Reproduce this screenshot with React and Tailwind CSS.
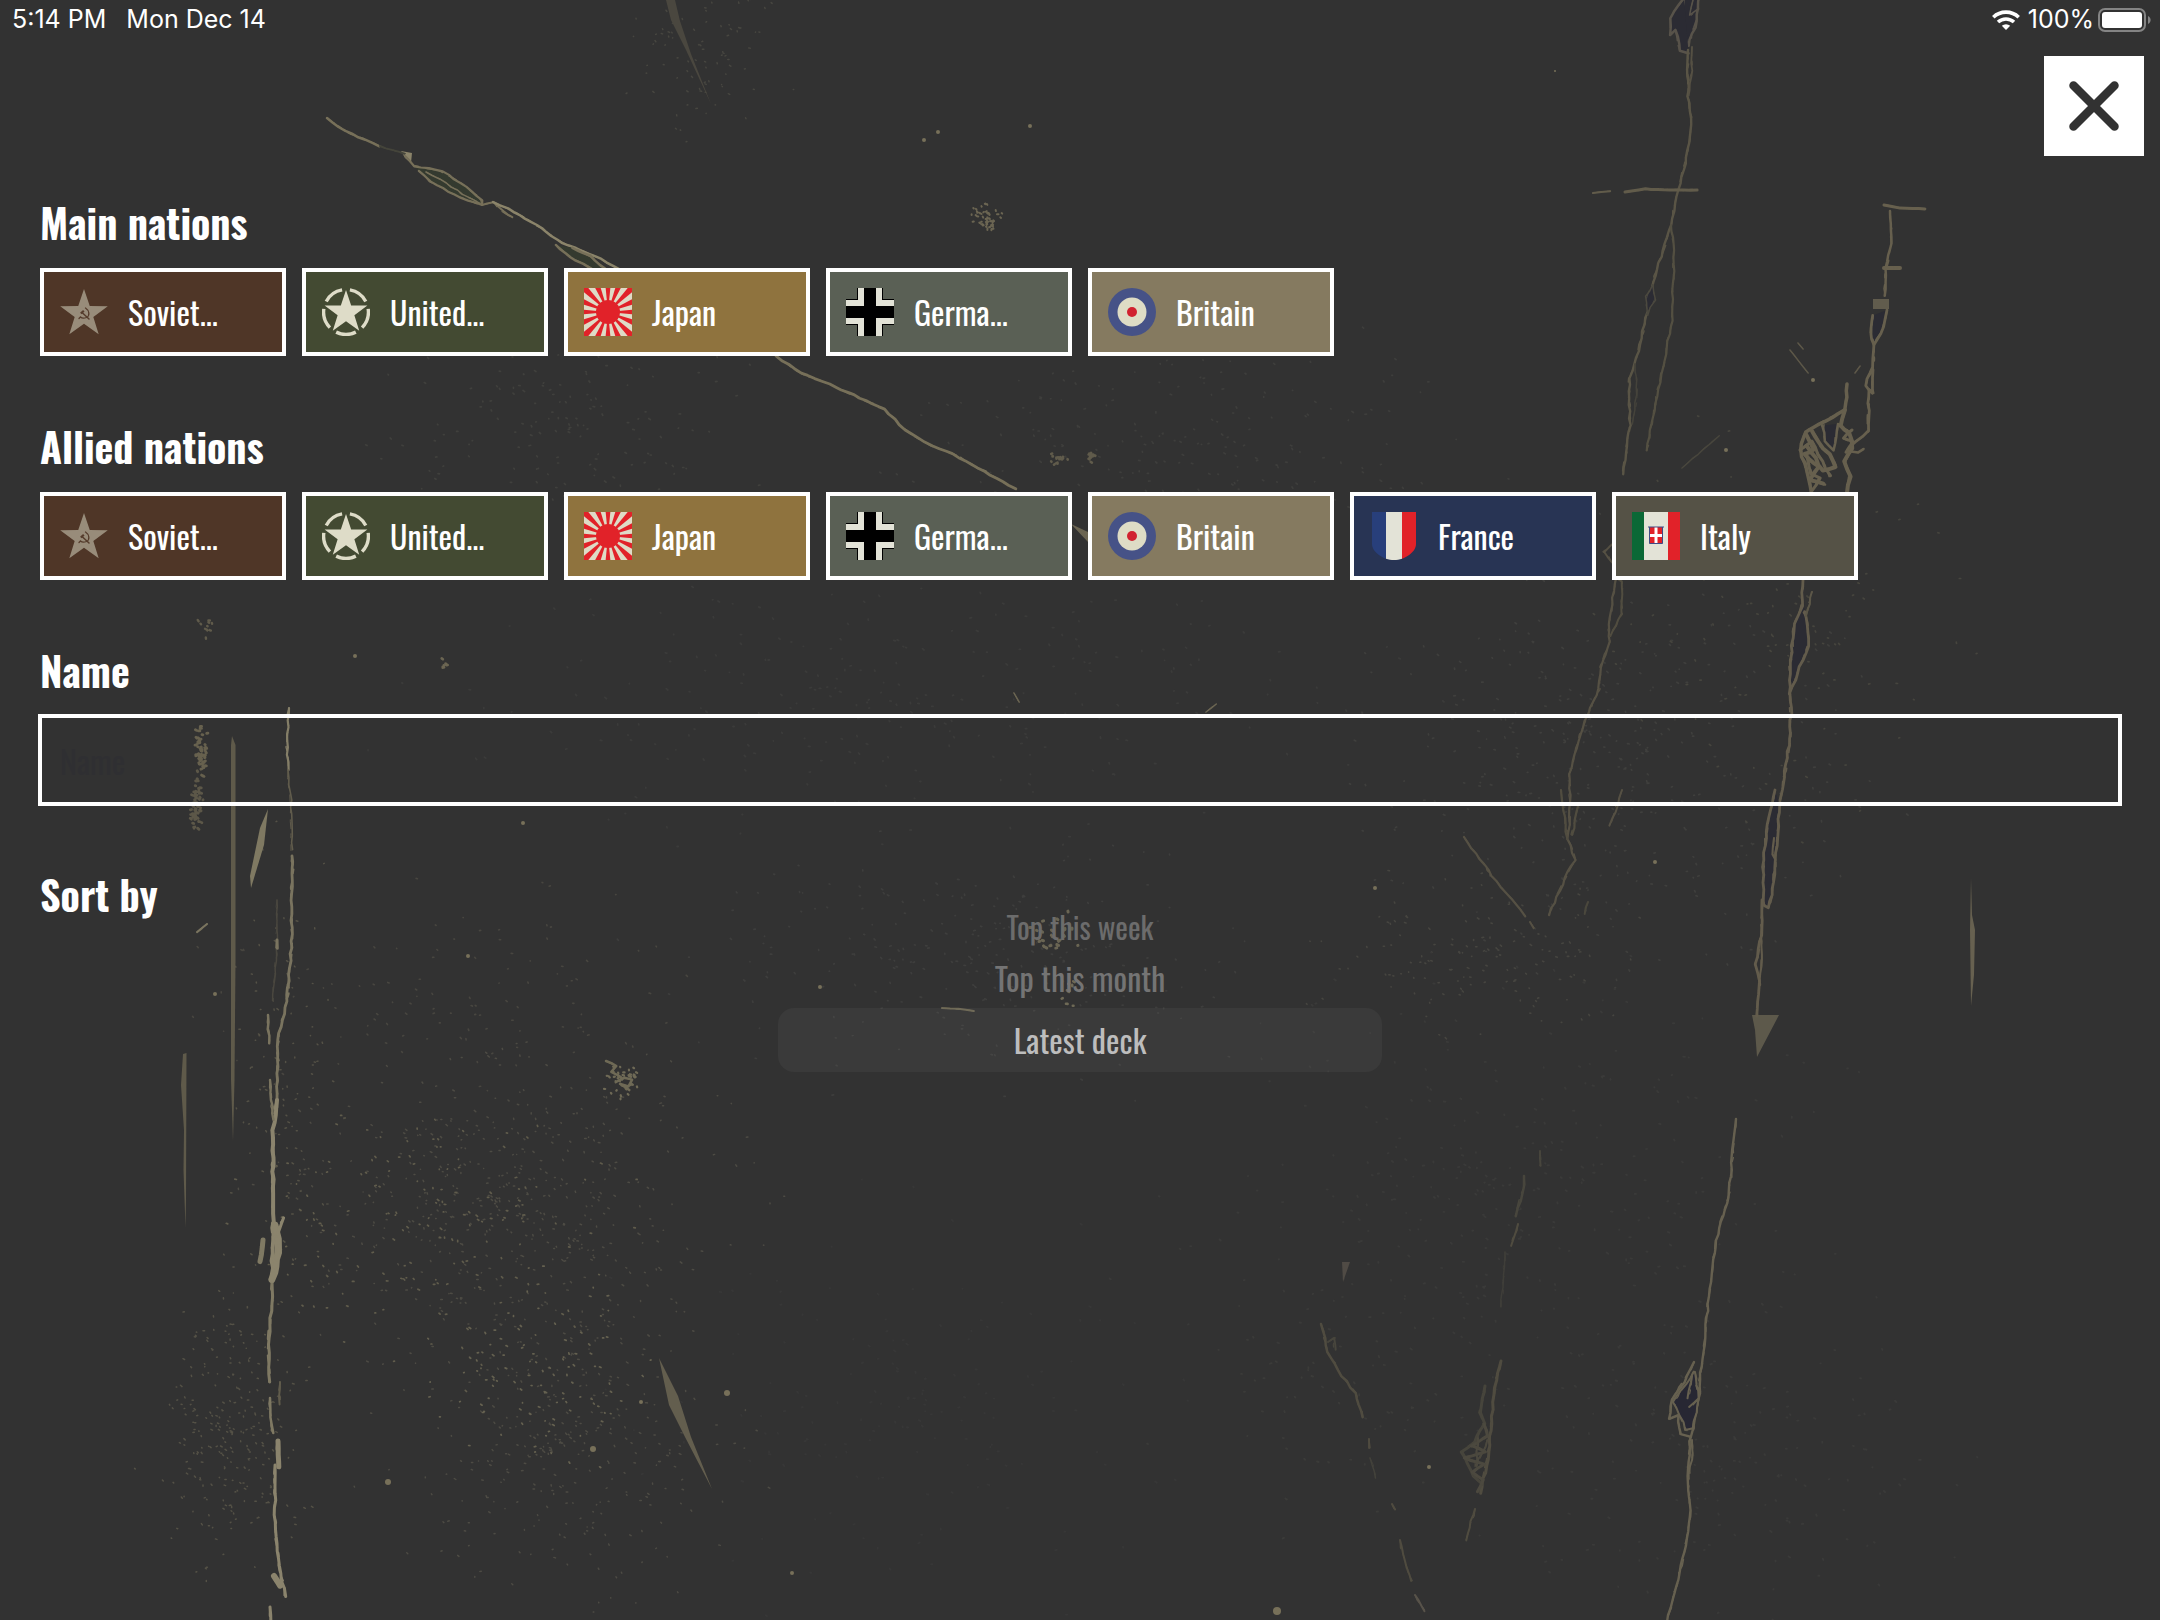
import { useId } from "react";

/* ---------- worn-surface backdrop ---------- */

function seeded(seed) {
  let s = seed;
  return () => {
    s = (s * 1664525 + 1013904223) % 4294967296;
    return s / 4294967296;
  };
}

// Turns a coarse list of points into a slightly ragged line.
function crack(points, seed = 7, jitter = 1.2) {
  const rnd = seeded(seed);
  let d = `M${points[0][0]} ${points[0][1]}`;
  for (let i = 1; i < points.length; i++) {
    const [x0, y0] = points[i - 1];
    const [x1, y1] = points[i];
    const steps = Math.max(1, Math.round(Math.hypot(x1 - x0, y1 - y0) / 7));
    for (let k = 1; k <= steps; k++) {
      const t = k / steps;
      const x = x0 + (x1 - x0) * t + (rnd() - 0.5) * 2 * jitter;
      const y = y0 + (y1 - y0) * t + (rnd() - 0.5) * jitter;
      d += `L${x.toFixed(1)} ${y.toFixed(1)}`;
    }
  }
  return d;
}

function speckles(cx, cy, rx, ry, count, seed) {
  const rnd = seeded(seed);
  let d = "";
  for (let i = 0; i < count; i++) {
    const a = rnd() * Math.PI * 2;
    const r = Math.pow(rnd(), 0.7) * (0.55 + rnd() * 0.75);
    d += `M${(cx + Math.cos(a) * r * rx).toFixed(1)} ${(cy + Math.sin(a) * r * ry).toFixed(1)}l${(rnd() * 1.6).toFixed(1)} ${(rnd() * 1.8 - 0.5).toFixed(1)}`;
  }
  return d;
}

const LINES = [
  // long diagonal, upper left
  { p: [[327, 118], [345, 131], [380, 146]], c: "#777059", w: 2.5 },
  { p: [[380, 146], [405, 154]], c: "#45453b", w: 2 },
  { p: [[405, 156], [415, 166], [442, 171], [461, 183], [482, 200], [482, 205], [461, 198], [430, 182], [419, 171]], c: "#777059", w: 2.2, f: "#343a2f" },
  { p: [[426, 172], [446, 183], [462, 194], [480, 203]], c: "#777059", w: 1.5 },
  { p: [[482, 205], [493, 202], [503, 211], [512, 217]], c: "#777059", w: 2 },
  { p: [[493, 202], [515, 212], [536, 225], [562, 243], [595, 256], [624, 272]], c: "#8b846a", w: 2.5 },
  { p: [[556, 245], [570, 257], [596, 271], [606, 270], [590, 256], [572, 248]], c: "#777059", w: 2.5, f: "#343a2f" },
  { p: [[776, 356], [801, 373], [836, 387], [884, 409], [905, 430], [932, 446], [953, 454], [991, 475], [1015, 489]], c: "#777059", w: 2.8 },
  // upper right, long crack
  { p: [[1699, -4], [1697, 21], [1688, 46], [1680, 29], [1684, -4]], c: "#58534a", w: 2.5, f: "#2b2b33" },
  { p: [[1684, -2], [1670, 18], [1670, 35], [1676, 30], [1680, 51], [1688, 53]], c: "#58534a", w: 2.5, f: "#2b2b33" },
  { p: [[1693, 0], [1690, 15], [1698, 9]], c: "#58534a", w: 1.5 },
  { p: [[1688, 50], [1688, 96], [1691, 118], [1690, 137], [1685, 164], [1678, 190], [1671, 225], [1653, 282], [1646, 318], [1635, 364], [1629, 378], [1630, 425], [1623, 474]], c: "#5a5546", w: 2.4 },
  { p: [[1692, 47], [1692, 71], [1688, 96]], c: "#565144", w: 1.8 },
  { p: [[1635, 364], [1637, 395], [1632, 424]], c: "#45433b", w: 1.5 },
  { p: [[1653, 285], [1655, 300], [1647, 315], [1646, 296], [1653, 285]], c: "#4c493f", w: 1.5, f: "#2b2b33" },
  { p: [[1671, 225], [1674, 250], [1672, 321], [1663, 367], [1655, 404], [1647, 450]], c: "#545042", w: 2.2 },
  { p: [[1616, 541], [1604, 552], [1616, 566]], c: "#565144", w: 2 },
  { p: [[1616, 578], [1609, 624], [1609, 642], [1601, 667], [1599, 689], [1588, 714], [1580, 735], [1570, 774], [1570, 810], [1568, 839], [1575, 860], [1565, 878], [1549, 915]], c: "#565144", w: 2.2 },
  { p: [[1616, 578], [1622, 581], [1622, 614], [1610, 636]], c: "#514d40", w: 2 },
  { p: [[1561, 790], [1567, 839]], c: "#514d40", w: 2.2 },
  { p: [[1578, 806], [1572, 835]], c: "#514d40", w: 2.2 },
  { p: [[1464, 837], [1492, 876], [1525, 916]], c: "#565144", w: 2.2 },
  { p: [[1530, 922], [1534, 928]], c: "#565144", w: 2 },
  { p: [[1622, 790], [1610, 826]], c: "#565144", w: 2 },
  { p: [[1588, 902], [1584, 914]], c: "#4b483d", w: 2 },
  { p: [[1593, 193], [1610, 191]], c: "#625c4b", w: 2, j: 0.4 },
  { p: [[1625, 192], [1645, 189], [1670, 190], [1697, 190]], c: "#625c4b", w: 3, j: 0.5 },
  // far right crack
  { p: [[1884, 205], [1900, 208], [1925, 209]], c: "#67604e", w: 3, j: 0.3 },
  { p: [[1890, 211], [1892, 243], [1886, 268], [1885, 296]], c: "#67604e", w: 2.5 },
  { p: [[1884, 268], [1900, 268]], c: "#67604e", w: 4, j: 0.1 },
  { p: [[1887, 310], [1884, 327], [1874, 345], [1871, 334], [1873, 315]], c: "#67604e", w: 2.8, f: "#2b2b33" },
  { p: [[1874, 343], [1873, 367], [1865, 386], [1873, 393], [1873, 370]], c: "#67604e", w: 2.8 },
  { p: [[1869, 390], [1868, 431], [1850, 447]], c: "#67604e", w: 2.8 },
  { p: [[1847, 384], [1845, 410], [1825, 421], [1805, 432], [1800, 450], [1807, 471], [1812, 494]], c: "#67604e", w: 3.5 },
  { p: [[1845, 410], [1840, 426], [1850, 433], [1852, 448], [1845, 461], [1850, 477], [1846, 494]], c: "#67604e", w: 4 },
  { p: [[1852, 430], [1843, 438], [1853, 442], [1846, 452]], c: "#67604e", w: 3 },
  { p: [[1838, 424], [1834, 450], [1825, 441], [1823, 425]], c: "#67604e", w: 2.5, f: "#2b2b33" },
  { p: [[1806, 434], [1814, 450], [1804, 454], [1818, 467], [1810, 480], [1824, 484]], c: "#67604e", w: 4 },
  { p: [[1812, 431], [1822, 448], [1830, 454], [1836, 467], [1822, 471], [1816, 458], [1806, 446]], c: "#67604e", w: 4 },
  { p: [[1800, 450], [1812, 441], [1822, 461], [1830, 476]], c: "#67604e", w: 3 },
  { p: [[1807, 456], [1811, 474], [1820, 478], [1812, 492]], c: "#67604e", w: 3 },
  { p: [[1848, 451], [1858, 453], [1864, 449]], c: "#67604e", w: 2.5 },
  { p: [[1803, 580], [1802, 606], [1798, 615], [1794, 624], [1790, 667], [1790, 694], [1800, 667], [1808, 646], [1808, 625], [1804, 612]], c: "#635c4c", w: 2.8, f: "#2b2b33" },
  { p: [[1806, 616], [1812, 592]], c: "#5c5748", w: 2 },
  { p: [[1790, 694], [1791, 714], [1790, 739], [1785, 771], [1780, 803]], c: "#635c4c", w: 2.8 },
  { p: [[1775, 790], [1767, 824], [1763, 867], [1764, 905], [1768, 908], [1773, 889], [1777, 846], [1779, 806]], c: "#635c4c", w: 2.8, f: "#2b2b33" },
  { p: [[1774, 838], [1772, 854], [1776, 860]], c: "#635c4c", w: 2 },
  { p: [[1762, 900], [1761, 935], [1756, 964], [1760, 981], [1757, 1016]], c: "#635c4c", w: 2.8 },
  { p: [[1761, 935], [1762, 960], [1760, 985]], c: "#635c4c", w: 2 },
  { p: [[1736, 1119], [1733, 1149], [1729, 1197], [1719, 1228], [1712, 1266], [1708, 1304], [1704, 1345], [1700, 1373], [1699, 1400], [1693, 1428], [1690, 1441], [1688, 1476], [1690, 1517], [1685, 1552], [1676, 1586], [1667, 1622]], c: "#676150", w: 2.4 },
  { p: [[1694, 1362], [1684, 1382], [1671, 1400], [1670, 1419], [1678, 1415], [1680, 1434], [1690, 1437]], c: "#676150", w: 2.5 },
  { p: [[1695, 1372], [1699, 1398], [1693, 1428], [1686, 1430], [1677, 1408], [1673, 1402], [1694, 1372]], c: "#676150", w: 2, f: "#272733" },
  { p: [[1692, 1376], [1688, 1398]], c: "#676150", w: 2 },
  { p: [[1699, 1398], [1690, 1407]], c: "#676150", w: 2 },
  { p: [[1692, 1440], [1692, 1460], [1688, 1480]], c: "#676150", w: 2 },
  // faint lower centre-right
  { p: [[1540, 1151], [1540, 1166]], c: "#48463d", w: 2 },
  { p: [[1524, 1176], [1524, 1186], [1516, 1216]], c: "#48463d", w: 2.5 },
  { p: [[1518, 1224], [1516, 1231], [1511, 1246]], c: "#504c40", w: 2 },
  { p: [[1505, 1252], [1504, 1275], [1501, 1307]], c: "#3f3e39", w: 1.5 },
  { p: [[1501, 1361], [1496, 1380], [1491, 1424], [1488, 1459], [1480, 1493]], c: "#504c40", w: 3 },
  { p: [[1485, 1386], [1480, 1412], [1484, 1424], [1474, 1442], [1462, 1452], [1474, 1476], [1482, 1484]], c: "#47453c", w: 3 },
  { p: [[1484, 1424], [1488, 1436], [1472, 1446], [1486, 1452], [1464, 1458], [1484, 1464], [1472, 1472], [1484, 1480], [1478, 1492]], c: "#4c493f", w: 3 },
  { p: [[1478, 1438], [1476, 1466], [1488, 1440]], c: "#4c493f", w: 2 },
  { p: [[1475, 1509], [1466, 1540]], c: "#504c40", w: 2 },
  { p: [[1321, 1324], [1328, 1352], [1342, 1376], [1355, 1393], [1363, 1417]], c: "#504c40", w: 2.5 },
  { p: [[1328, 1342], [1334, 1338], [1335, 1350]], c: "#48463d", w: 2 },
  { p: [[1369, 1439], [1369, 1448]], c: "#504c40", w: 2 },
  { p: [[1370, 1458], [1376, 1478]], c: "#43423b", w: 1.5 },
  { p: [[1392, 1504], [1395, 1509]], c: "#504c40", w: 2 },
  { p: [[1400, 1540], [1405, 1562], [1412, 1581]], c: "#504c40", w: 2 },
  { p: [[1415, 1595], [1425, 1611]], c: "#58534a", w: 2 },
  // left vertical crack
  { p: [[289, 708], [287, 740], [288, 770]], c: "#857f68", w: 2.2 },
  { p: [[288, 770], [291, 800], [292, 850]], c: "#615c4c", w: 1.6 },
  { p: [[292, 856], [293, 867], [291, 900], [292, 941], [287, 1001], [278, 1040], [277, 1107]], c: "#7a745f", w: 2.8 },
  { p: [[277, 1100], [273, 1130], [273, 1221], [272, 1281]], c: "#8b846d", w: 4 },
  { p: [[272, 1281], [272, 1304], [268, 1345], [270, 1382]], c: "#7f7963", w: 3 },
  { p: [[270, 1398], [270, 1410], [273, 1433]], c: "#7f7963", w: 2.5 },
  { p: [[278, 1441], [278, 1467]], c: "#8b846d", w: 5 },
  { p: [[275, 1465], [275, 1529], [279, 1566], [285, 1596]], c: "#8b846d", w: 3 },
  { p: [[270, 1607], [271, 1622]], c: "#8b846d", w: 3 },
  { p: [[280, 1382], [279, 1404]], c: "#615c4c", w: 2 },
  { p: [[277, 900], [277, 948], [273, 1001]], c: "#4a473f", w: 1.5 },
  { p: [[270, 1080], [273, 1120]], c: "#7a745f", w: 2.4 },
  { p: [[268, 1015], [269, 1043]], c: "#7a745f", w: 2.5 },
  { p: [[277, 940], [277, 948]], c: "#7a745f", w: 3 },
  { p: [[275, 1225], [279, 1246], [276, 1266], [272, 1279]], c: "#8b846d", w: 7 },
  { p: [[277, 1236], [283, 1218]], c: "#8b846d", w: 3 },
  { p: [[263, 1240], [260, 1262]], c: "#7f7963", w: 5 },
  { p: [[274, 1576], [280, 1586]], c: "#8b846d", w: 6 },
  // small nicks
  { p: [[207, 924], [197, 932]], c: "#7a745f", w: 2, j: 0.3 },
  { p: [[1790, 350], [1808, 373]], c: "#5c5748", w: 1.5, j: 0.2 },
  { p: [[1798, 343], [1803, 349]], c: "#5c5748", w: 1.5, j: 0.2 },
  { p: [[1682, 468], [1719, 436]], c: "#48463d", w: 1.5, j: 0.5 },
  { p: [[1855, 373], [1860, 366]], c: "#5c5748", w: 1.5, j: 0.2 },
  { p: [[942, 1008], [958, 1009], [974, 1011]], c: "#6b6552", w: 2, j: 0.4 },
  { p: [[1206, 712], [1216, 704]], c: "#6b6552", w: 1.5, j: 0.4 },
  { p: [[1014, 693], [1019, 702]], c: "#6b6552", w: 1.5, j: 0.4 },
  // chipped cluster, lower left
  { p: [[606, 1061], [616, 1066], [612, 1072], [620, 1076]], c: "#6f6a56", w: 2.5 },
  { p: [[616, 1082], [624, 1078], [632, 1080], [628, 1086], [620, 1084], [630, 1090]], c: "#6f6a56", w: 2.5 },
];

const SHARDS = [
  { d: "M666 0H675L680 21L691 54L711 104L686 50L671 20Z", c: "#4a473f" },
  { d: "M659 1358L678 1396L691 1437L712 1489L685 1437L669 1405Z", c: "#635e4e" },
  { d: "M232 736L235.500 745V960L234.500 1080L233 1141L231 1080L231 745Z", c: "#5f5a4a" },
  { d: "M183 1054L186.500 1053L186 1200L185.500 1228L183.500 1170L184 1130L181 1085Z", c: "#5f5a4a" },
  { d: "M268 809L264 845L251 888L250 876L260 828Z", c: "#7f7962" },
  { d: "M1971 878L1972 915L1975 930L1974 975L1971 1006L1970 930Z", c: "#676150" },
  { d: "M1752 1015L1779 1015L1757 1057L1755 1030Z", c: "#5d594b" },
  { d: "M1342 1262H1350L1343 1282Z", c: "#504b45" },
  { d: "M401 151L412 153L411 163L405 158Z", c: "#8b846a" },
  { d: "M1873 299H1889V309H1873Z", c: "#615c4d" },
  { d: "M1071 524L1088 532V542Z", c: "#6b6552" },
];

const FIELDS = [
  { a: [500, 1200, 230, 160, 480, 3], c: "#4d4b44", w: 1.5 },
  { a: [420, 1230, 180, 130, 170, 77], c: "#605c4c", w: 1.7 },
  { a: [560, 1440, 170, 160, 320, 12], c: "#4d4b44", w: 1.5 },
  { a: [540, 1370, 110, 90, 110, 61], c: "#656150", w: 1.7 },
  { a: [230, 1430, 75, 150, 260, 21], c: "#545146", w: 1.5 },
  { a: [285, 1100, 50, 260, 110, 31], c: "#545146", w: 1.5 },
  { a: [470, 1000, 240, 110, 110, 14], c: "#484640", w: 1.6 },
  { a: [700, 60, 85, 90, 90, 33], c: "#474640", w: 1.5 },
  { a: [570, 420, 180, 100, 150, 41], c: "#40403d", w: 1.7 },
  { a: [900, 700, 480, 140, 260, 51], c: "#3b3b3a", w: 1.8 },
  { a: [980, 960, 300, 120, 240, 81], c: "#3e3e3d", w: 1.7 },
  { a: [1620, 760, 260, 220, 400, 91], c: "#3f3f3d", w: 1.7 },
  { a: [1480, 950, 160, 90, 140, 99], c: "#464540", w: 1.6 },
  { a: [1500, 1180, 340, 220, 320, 101], c: "#3a3a39", w: 1.9 },
  { a: [1180, 440, 300, 110, 200, 105], c: "#3e3e3c", w: 1.7 },
  { a: [1720, 1460, 260, 150, 180, 111], c: "#3a3a39", w: 1.9 },
  { a: [900, 1400, 260, 200, 160, 121], c: "#373737", w: 1.9 },
  { a: [1780, 620, 180, 180, 110, 131], c: "#46453e", w: 1.7 },
  { a: [1330, 1400, 160, 120, 60, 139], c: "#3b3b39", w: 1.9 },
  { a: [986, 217, 14, 17, 50, 141], c: "#6b6552", w: 2 },
  { a: [620, 1078, 19, 19, 40, 151], c: "#6f6a56", w: 2.2 },
  { a: [1050, 935, 26, 24, 26, 161], c: "#6a6553", w: 3 },
  { a: [1070, 990, 12, 14, 10, 171], c: "#6f6a56", w: 2.6 },
  { a: [1057, 459, 10, 7, 14, 181], c: "#605b4b", w: 2.6 },
  { a: [1092, 456, 5, 9, 10, 191], c: "#605b4b", w: 2.6 },
  { a: [201, 750, 6, 28, 50, 201], c: "#67614e", w: 2.8 },
  { a: [196, 805, 6, 30, 60, 211], c: "#5c5748", w: 2.8 },
  { a: [206, 625, 8, 14, 10, 221], c: "#605b4b", w: 2.4 },
  { a: [445, 662, 6, 8, 6, 231], c: "#6b6552", w: 2.6 },
];

const DOTS = [
  [727, 1393, 3], [593, 1449, 3], [388, 1482, 3], [792, 1573, 2], [215, 994, 2],
  [468, 956, 2], [1277, 1611, 4], [1375, 888, 2], [355, 656, 2], [820, 987, 2],
  [1726, 450, 2], [1813, 380, 2], [641, 1402, 2], [1555, 71, 1], [938, 132, 2],
  [924, 140, 2], [1030, 126, 2], [523, 823, 2], [1655, 862, 2], [1429, 1467, 2],
];

function Backdrop() {
  return (
    <svg
      aria-hidden="true"
      viewBox="0 0 2160 1620"
      preserveAspectRatio="xMidYMid slice"
      className="pointer-events-none absolute inset-0 h-full w-full"
      fill="none"
      strokeLinecap="round"
      strokeLinejoin="round"
    >
      {FIELDS.map((f, i) => (
        <path key={i} d={speckles(...f.a)} stroke={f.c} strokeWidth={f.w} />
      ))}
      {SHARDS.map((s, i) => (
        <path key={i} d={s.d} fill={s.c} />
      ))}
      {LINES.map((l, i) => (
        <g key={i} stroke={l.c}>
          <path d={crack(l.p, i * 13 + 5, l.j ?? 0.9)} strokeWidth={l.w} fill={l.f ?? "none"} />
          <path
            d={crack(l.p, i * 29 + 11, (l.j ?? 0.9) * 1.4)}
            strokeWidth={l.w * 0.6}
            strokeDasharray="9 5 4 7"
          />
        </g>
      ))}
      {DOTS.map(([x, y, r], i) => (
        <circle key={i} cx={x} cy={y} r={r} fill="#777059" />
      ))}
    </svg>
  );
}

/* ---------- nation emblems (48 x 48) ---------- */

function polar(r, deg, cx = 24, cy = 24) {
  const a = (deg * Math.PI) / 180;
  return `${(cx + r * Math.cos(a)).toFixed(2)} ${(cy + r * Math.sin(a)).toFixed(2)}`;
}

function starPath(outer, inner, cy) {
  const pts = [];
  for (let i = 0; i < 10; i++) pts.push(polar(i % 2 ? inner : outer, -90 + i * 36, 24, cy));
  return `M${pts.join("L")}Z`;
}

function SovietIcon() {
  return (
    <>
      <path d={starPath(25, 9.8, 26)} fill="#988c7a" />
      <g fill="none" stroke="#553c2c" strokeLinecap="round">
        <path d="M25.500 20C29.500 22.500 30 28 26.500 29.500C24 30.500 21.500 30 20.500 29L19 30.500" strokeWidth="1.300" />
        <path d="M22 24.500L29 31" strokeWidth="1.500" />
        <path d="M20.800 25.500L23.800 22.800" strokeWidth="2.200" strokeLinecap="butt" />
      </g>
    </>
  );
}

function UnitedStatesIcon() {
  return (
    <>
      <path d={starPath(22.5, 8.8, 24.5)} fill="#dedcc8" />
      {[0, 1, 2, 3, 4].map((i) => (
        <path
          key={i}
          d={`M${polar(22.4, -80 + i * 72)}A22.4 22.4 0 0 1 ${polar(22.4, -28 + i * 72)}`}
          fill="none"
          stroke="#dedcc8"
          strokeWidth="3.400"
        />
      ))}
    </>
  );
}

function JapanIcon() {
  const clip = useId();
  return (
    <>
      <clipPath id={clip}>
        <rect width="48" height="48" />
      </clipPath>
      <rect width="48" height="48" fill="#dedbc6" />
      <g fill="#e12229" clipPath={`url(#${clip})`}>
        {Array.from({ length: 16 }, (_, i) => (
          <path key={i} d={`M24 24L${polar(40, i * 22.5 - 5.6)}L${polar(40, i * 22.5 + 5.6)}Z`} />
        ))}
        <circle cx="24" cy="24" r="12" />
      </g>
    </>
  );
}

function GermanyIcon() {
  return (
    <>
      <path d="M11 0H37V11H48V37H37V48H11V37H0V11H11Z" fill="#000" />
      <path d="M12 0H36V12H48V36H36V48H12V36H0V12H12Z" fill="#e3e3d7" />
      <path d="M18 0H30V18H48V30H30V48H18V30H0V18H18Z" fill="#000" />
    </>
  );
}

function BritainIcon() {
  return (
    <>
      <circle cx="24" cy="24" r="24" fill="#465287" />
      <circle cx="24" cy="24" r="14.500" fill="#dedcc5" />
      <circle cx="24" cy="24" r="5" fill="#d1222f" />
    </>
  );
}

function FranceIcon() {
  const clip = useId();
  return (
    <>
      <clipPath id={clip}>
        <path d="M2 0H46V32C46 40 35 48 24 48C13 48 2 40 2 32Z" />
      </clipPath>
      <g clipPath={`url(#${clip})`}>
        <rect x="2" width="14" height="48" fill="#283f7b" />
        <rect x="16" width="16" height="48" fill="#e3e3d7" />
        <rect x="32" width="14" height="48" fill="#e12229" />
      </g>
    </>
  );
}

function ItalyIcon() {
  return (
    <>
      <rect width="12" height="48" fill="#0a6836" />
      <rect x="12" width="24" height="48" fill="#e3e3d7" />
      <rect x="36" width="12" height="48" fill="#e12229" />
      <path d="M16 15H32M17.500 15V31.500H30.500V15" fill="#e12229" stroke="#3f4a86" />
      <path d="M22.500 15.500H25.500V22H30V25H25.500V31H22.500V25H18V22H22.500Z" fill="#fff" />
    </>
  );
}

const SOVIET = { label: "Soviet...", name: "Soviet Union", Icon: SovietIcon, tone: "bg-[#4f3627]" };
const UNITED = { label: "United...", name: "United States", Icon: UnitedStatesIcon, tone: "bg-[#434a32]" };
const JAPAN = { label: "Japan", name: "Japan", Icon: JapanIcon, tone: "bg-[#8f733e]" };
const GERMANY = { label: "Germa...", name: "Germany", Icon: GermanyIcon, tone: "bg-[#5a6055]" };
const BRITAIN = { label: "Britain", name: "Britain", Icon: BritainIcon, tone: "bg-[#857a60]" };
const FRANCE = { label: "France", name: "France", Icon: FranceIcon, tone: "bg-[#283454]" };
const ITALY = { label: "Italy", name: "Italy", Icon: ItalyIcon, tone: "bg-[#555246]" };

const MAIN = [SOVIET, UNITED, JAPAN, GERMANY, BRITAIN];
const ALLIED = [...MAIN, FRANCE, ITALY];

function NationButton({ nation }) {
  const { label, name, Icon, tone } = nation;
  return (
    <button
      type="button"
      title={name}
      className={`flex h-[88px] w-[246px] items-center gap-5 border-4 border-white px-4 text-left text-[32px] leading-[48px] text-white ${tone}`}
    >
      <svg viewBox="0 0 48 48" className="size-12 shrink-0" aria-hidden="true">
        <Icon />
      </svg>
      {label}
    </button>
  );
}

function Heading({ children, ...rest }) {
  return (
    <h2 className="mb-[22px] text-[40px] leading-[48px] font-bold text-white" {...rest}>
      {children}
    </h2>
  );
}

function NationSection({ title, nations }) {
  return (
    <section>
      <Heading>{title}</Heading>
      <div className="flex flex-wrap gap-4">
        {nations.map((n) => (
          <NationButton key={n.name} nation={n} />
        ))}
      </div>
    </section>
  );
}

/* ---------- status bar ---------- */

function StatusBar() {
  return (
    <header className="flex h-10 items-center justify-between pr-2 pl-3 font-['Inter',sans-serif] text-[25px] text-white">
      <div className="flex gap-5">
        <span>5:14 PM</span>
        <span>Mon Dec 14</span>
      </div>
      <div className="flex items-center gap-1">
        <svg viewBox="0 0 28 20" className="mr-1 h-5 w-7" aria-hidden="true" fill="none" stroke="#fff" strokeWidth="3.600">
          <path d="M1.300 7.200A18.500 18.500 0 0 1 26.700 7.200" />
          <path d="M6 12A12 12 0 0 1 22 12" />
          <path d="M14 20L9.800 15.800A6.200 6.200 0 0 1 18.200 15.800Z" fill="#fff" stroke="none" />
        </svg>
        <span>100%</span>
        <svg viewBox="0 0 54 24" className="h-6 w-[54px]" aria-hidden="true">
          <rect x="1" y="1" width="46" height="22" rx="6" fill="none" stroke="#848484" strokeWidth="2" />
          <rect x="4" y="4" width="40" height="16" rx="3" fill="#fff" />
          <path d="M50 8C53.500 9.500 53.500 14.500 50 16Z" fill="#848484" />
        </svg>
      </div>
    </header>
  );
}

export default function App() {
  return (
    <div className="relative min-h-screen overflow-hidden bg-[#323232]">
      <Backdrop />
      <div className="relative">
        <StatusBar />
        <div className="font-['Oswald','Liberation_Sans_Narrow','Roboto_Condensed',sans-serif]">
          <div className="flex justify-end px-4 pt-4">
            <button type="button" aria-label="Close" className="size-[100px] bg-white">
              <svg viewBox="0 0 100 100" className="size-full" aria-hidden="true">
                <path d="M29.500 29.500L70.500 70.500M70.500 29.500L29.500 70.500" stroke="#323232" strokeWidth="8.500" strokeLinecap="round" />
              </svg>
            </button>
          </div>

          <main className="flex flex-col gap-[66px] px-10 pt-[42px] pb-10">
            <NationSection title="Main nations" nations={MAIN} />
            <NationSection title="Allied nations" nations={ALLIED} />

            <section>
              <Heading>
                <label htmlFor="deck-name">Name</label>
              </Heading>
              <div className="-m-0.5">
                <input
                  id="deck-name"
                  type="text"
                  placeholder="Name"
                  className="block h-[92px] w-full border-4 border-white bg-transparent px-[18px] text-[32px] text-white placeholder:text-[#2f2f32] outline-none"
                />
              </div>
            </section>

            <section aria-labelledby="sort-heading">
              <Heading id="sort-heading">Sort by</Heading>
              <div role="radiogroup" aria-labelledby="sort-heading" className="-mt-10 flex flex-col items-center">
                <label className="flex h-[52px] items-center text-[30px] text-[#6c6c6c]">
                  <input type="radio" name="sort" className="sr-only" />
                  Top this week
                </label>
                <label className="mb-1 flex h-[52px] items-center text-[32px] text-[#747474]">
                  <input type="radio" name="sort" className="sr-only" />
                  Top this month
                </label>
                <label className="flex h-16 w-full max-w-[604px] items-center justify-center rounded-2xl bg-white/4 text-[32px] text-[#bdbdbd]">
                  <input type="radio" name="sort" defaultChecked className="sr-only" />
                  Latest deck
                </label>
              </div>
            </section>
          </main>
        </div>
      </div>
    </div>
  );
}
